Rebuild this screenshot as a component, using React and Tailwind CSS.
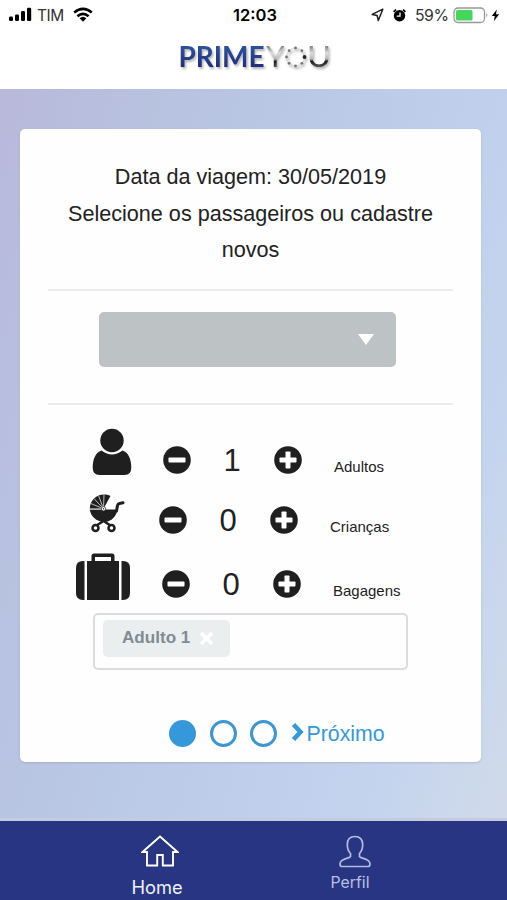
import React from "react";

const INK = "#1f1f1f";

function Signal() {
  return (
    <svg className="block" width="24" height="16" viewBox="0 0 24 16">
      <rect x="1" y="9.5" width="4" height="4.5" rx="1.2" />
      <rect x="7" y="7.5" width="4" height="6.5" rx="1.2" />
      <rect x="13" y="4" width="4" height="10" rx="1.2" />
      <rect x="19" y="0.8" width="4.2" height="13.2" rx="1.2" />
    </svg>
  );
}

function Wifi() {
  return (
    <svg className="block" width="20" height="16" viewBox="0 0 20 16" fill="none" stroke="#000" strokeWidth="2.6">
      <path d="M1.2 5.6Q10-2 18.8 5.6" />
      <path d="M4.4 9.2Q10 4.4 15.6 9.2" />
      <path d="M6.6 11.3Q10 8.2 13.4 11.3L10 14.8Z" fill="#000" stroke="none" />
    </svg>
  );
}

function StatusBar() {
  return (
    <div className="flex h-[30px] items-center pl-2 font-[Inter,sans-serif] text-[16px] leading-none text-black">
      <div className="flex w-[225px] items-center">
        <Signal />
        <span className="ml-[5px] w-[27px] pt-px text-[15.5px] tracking-[-0.4px] text-[#333]">TIM</span>
        <span className="ml-[9px]"><Wifi /></span>
      </div>
      <span className="w-[46px] text-[16.5px] font-semibold">12:03</span>
      <div className="ml-[92px] flex items-center">
        <svg className="block" width="13" height="14" viewBox="0 0 13 14" fill="none" stroke="#222" strokeWidth="1.5" strokeLinejoin="round">
          <path d="M11.8 1.2L1.2 6.4L6.1 7.5L7.3 12.5Z" />
        </svg>
        <svg className="ml-[8px] block" width="15" height="15" viewBox="0 0 15 15">
          <circle cx="7.5" cy="7.8" r="5.7" />
          <path d="M1.6 3.8L4 1.6M13.4 3.8L11 1.6" stroke="#000" strokeWidth="1.8" />
          <path d="M8 4.5V8.2H4.7" fill="none" stroke="#fff" strokeWidth="1.3" />
        </svg>
        <span className="ml-[8px] w-[34px] pt-px text-[15.8px] tracking-[-0.5px] text-[#333]">59%</span>
        <svg className="ml-[4px] block" width="36" height="17" viewBox="0 0 36 17">
          <rect x="1" y="1" width="30.5" height="14.5" rx="4" fill="#fff" stroke="#999" strokeWidth="1.3" />
          <rect x="3" y="3" width="16.5" height="10.5" rx="1.5" fill="#43d75c" />
          <path d="M33.3 6Q35.5 8.2 33.3 10.5Z" fill="#999" />
        </svg>
        <svg className="ml-[2px] block" width="9" height="13" viewBox="0 0 9 13">
          <path d="M5.8 0.5L0.8 7H3.8L2.8 12.3L8.2 5.3H5Z" />
        </svg>
      </div>
    </div>
  );
}

const STARS = Array.from({ length: 8 }, (_, i) => {
  const a = (i * Math.PI) / 4;
  return [119.5 + 9 * Math.sin(a), 21 - 9 * Math.cos(a)];
});

function Logo() {
  return (
    <svg className="block" width="160" height="42" viewBox="0 0 160 42">
      <defs>
        <linearGradient id="navy" x1="0" y1="0" x2="0" y2="1">
          <stop offset="0.2" stopColor="#2c52a0" />
          <stop offset="0.85" stopColor="#202c78" />
        </linearGradient>
        <linearGradient id="chrome" gradientUnits="userSpaceOnUse" x1="0" y1="11" x2="0" y2="31">
          <stop offset="0" stopColor="#8a8a8a" />
          <stop offset="0.3" stopColor="#dedede" />
          <stop offset="0.6" stopColor="#b5b5b5" />
          <stop offset="0.72" stopColor="#1c1c1c" />
          <stop offset="1" stopColor="#555" />
        </linearGradient>
        <filter id="shade" x="-5%" y="-20%" width="112%" height="150%">
          <feDropShadow dx="1.4" dy="2" stdDeviation="1.1" floodColor="#555" floodOpacity="0.45" />
        </filter>
      </defs>
      <g filter="url(#shade)" fontFamily="Lato, sans-serif" fontSize="28">
        <text x="2.5" y="31.3" fontWeight="700" fill="url(#navy)" textLength="86" lengthAdjust="spacingAndGlyphs">PRIME</text>
        <text x="90" y="31.3" fontWeight="400" fill="url(#chrome)" textLength="18.5" lengthAdjust="spacingAndGlyphs">Y</text>
        <circle cx="119.5" cy="21" r="9" fill="none" stroke="#d6d6d6" strokeWidth="1.2" />
        {STARS.map(([x, y], i) => (
          <circle key={i} cx={x} cy={y} r={i === 2 ? 1.9 : 1.4} fill={i === 2 ? "#222" : "#777"} />
        ))}
        <text x="131" y="31.3" fontWeight="400" fill="url(#chrome)" textLength="24" lengthAdjust="spacingAndGlyphs">U</text>
      </g>
    </svg>
  );
}

function Person() {
  return (
    <svg className="block" width="40" height="48" viewBox="0 0 40 48" fill={INK}>
      <circle cx="20" cy="12.5" r="11.7" />
      <path d="M9.5 22.4Q20 30.5 30.5 22.4C36.5 24.5 39.3 31 39.3 39.5Q39.3 47 32.5 47H7.5Q0.7 47 0.7 39.5C0.7 31 3.5 24.5 9.5 22.4Z" />
    </svg>
  );
}

function Stroller() {
  return (
    <svg className="block" width="36" height="39" viewBox="0 0 36 39">
      <path d="M14.5 14.8L21.5 2C12-2.5.8 3.5.8 14.8Z" fill={INK} />
      <path d="M.8 15.6H28.5C27.5 22 22.5 28 15.5 28C7 28 1.5 22 .8 15.6Z" fill={INK} />
      <path d="M14.5 14.8L1.8 9.5M14.5 14.8L5 4.6M14.5 14.8L9.5 1.5M14.5 14.8L15 .5M.8 15H14.5" stroke="#ccc" strokeWidth="0.9" />
      <path d="M27.5 17L28.5 11.5Q29 9.8 30.5 9.5L34 8.8" stroke={INK} strokeWidth="3" fill="none" strokeLinecap="round" />
      <path d="M7.5 31.5L14.5 27L21.5 31.5" stroke={INK} strokeWidth="2.4" fill="none" />
      <circle cx="14.5" cy="14.8" r="2.2" fill="#fff" stroke={INK} strokeWidth="0.7" />
      <circle cx="14.5" cy="14.8" r="0.7" fill={INK} />
      <circle cx="6.5" cy="34" r="3" fill="#fff" stroke={INK} strokeWidth="2.5" />
      <circle cx="22.5" cy="34" r="3" fill="#fff" stroke={INK} strokeWidth="2.5" />
    </svg>
  );
}

function Suitcase() {
  return (
    <svg className="block" width="54" height="48" viewBox="0 0 54 48" fill={INK}>
      <path d="M8.5 8V47H7Q0 47 0 40V15Q0 8 7 8ZM45.5 8V47H47Q54 47 54 40V15Q54 8 47 8Z" />
      <path fillRule="evenodd" d="M11 8H15.5V3Q15.5.5 18 .5H36Q38.5.5 38.5 3V8H43V47H11ZM19 4V8H35V4Z" />
    </svg>
  );
}

function Round({ plus }) {
  return (
    <svg className="block" width="28" height="28" viewBox="0 0 28 28">
      <circle cx="14" cy="14" r="13.8" fill={INK} />
      <rect x="5.5" y="11.5" width="17" height="5" rx="0.8" fill="#fff" />
      {plus && <rect x="11.5" y="5.5" width="5" height="17" rx="0.8" fill="#fff" />}
    </svg>
  );
}

function Stepper({ value, label }) {
  return (
    <div className="flex items-center">
      <Round />
      <span className="w-[82px] pt-[2px] text-center text-[31px] leading-7">{value}</span>
      <span className="ml-px"><Round plus /></span>
      <span className="ml-8 pt-[14px] text-[15px] leading-4">{label}</span>
    </div>
  );
}

export default function App() {
  return (
    <div className="flex h-[900px] w-[507px] flex-col overflow-hidden bg-white font-['Liberation_Sans',Arial,sans-serif] text-[#222]">
      <header className="flex h-[89px] flex-col">
        <StatusBar />
        <div className="flex pl-[176px] pt-[6px]"><Logo /></div>
      </header>

      <main className="h-[729px] bg-[linear-gradient(107deg,#b9b9da_0%,#b7c2df_22%,#bbcae7_48%,#bfcfec_66%,#c5d4ee_82%,#d0dae9_100%)] pl-[20px] pt-[40px]">
        <section className="flex h-[633px] w-[461px] flex-col rounded-[5px] bg-[#fefefe] px-7 shadow-[0_1px_2px_rgba(80,80,110,0.2)]">
          <div className="pt-[30px] text-center text-[21.6px] leading-[36.5px]">
            <p>Data da viagem: 30/05/2019</p>
            <p>Selecione os passageiros ou cadastre novos</p>
          </div>
          <hr className="mt-[20px] border-t-2 border-[#ebebeb]" />
          <div className="ml-[51px] mt-[21px] flex h-[55px] w-[297px] items-center justify-end rounded-[5px] bg-[#bdc3c5] pr-[22px]">
            <svg className="block" width="16" height="11" viewBox="0 0 16 11"><path d="M0 0H16L8 11Z" fill="#fff" /></svg>
          </div>
          <hr className="mt-[36px] border-t-2 border-[#ebebeb]" />

          <div className="flex h-[71px] items-end">
            <div className="ml-[44px] w-[71px]"><Person /></div>
            <div className="pb-px"><Stepper value="1" label="Adultos" /></div>
          </div>
          <div className="flex h-[59px] items-end">
            <div className="ml-[41px] w-[70px] pb-[2px]"><Stroller /></div>
            <Stepper value="0" label="Crianças" />
          </div>
          <div className="flex h-[66px] items-end">
            <div className="ml-[28px] w-[86px]"><Suitcase /></div>
            <div className="pb-[2px]"><Stepper value="0" label="Bagagens" /></div>
          </div>

          <div className="ml-[45px] mt-[12px] flex h-[57px] w-[315px] rounded-[5px] border-2 border-[#dcdcdc] pl-2 pt-[5px]">
            <div className="flex h-[37px] w-[127px] items-center rounded-[5px] bg-[#ebeeef] pl-[19px]">
              <span className="text-[17.1px] font-bold text-[#818b93]">Adulto 1</span>
              <svg className="ml-[9px] block" width="15" height="15" viewBox="0 0 15 15"><path d="M2 2L13 13M13 2L2 13" stroke="#fff" strokeWidth="3.8" /></svg>
            </div>
          </div>

          <div className="ml-[121px] mt-[50px] flex h-7 items-center text-[#3498db]">
            <span className="size-[27px] rounded-full bg-[#3498db]" />
            <span className="ml-[14px] size-[27px] rounded-full border-[3px] border-[#3c96d2]" />
            <span className="ml-[13px] size-[27px] rounded-full border-[3px] border-[#3c96d2]" />
            <svg className="mb-[3px] ml-[14px] block" width="14" height="20" viewBox="0 0 14 20"><path d="M2.5 2.5L9.5 10L2.5 17.5" fill="none" stroke="#3498db" strokeWidth="4.6" /></svg>
            <span className="ml-[1.5px] text-[21.3px] leading-7">Próximo</span>
          </div>
        </section>
      </main>

      <nav className="flex h-[82px] border-t-[3px] border-[#c3cbe0] bg-[#283583] font-[Inter,sans-serif]">
        <div className="ml-[117px] flex w-20 flex-col items-center pt-[14px] text-[#eef0fa]">
          <svg className="ml-[6px] block" width="38" height="32" viewBox="0 0 38 32" fill="none" stroke="#fff" strokeWidth="1.9">
            <path d="M19 1.5L36.5 17H32V30.5H21.8V20H16.2V30.5H6V17H1.5Z" />
          </svg>
          <span className="mt-[8px] text-[18.3px] leading-6">Home</span>
        </div>
        <div className="ml-[113px] flex w-20 flex-col items-center pt-[14px] text-[#b9c0e2]">
          <svg className="ml-[9px] block" width="34" height="33" viewBox="0 0 34 33" fill="none" stroke="#b4bbdf" strokeWidth="1.7">
            <path d="M17 1.5C12 1.5 9.3 4.5 9.3 9.5C9.3 14 10.5 16.5 12.5 18.5V21.5C11 24 2 23 2 29Q2 31.5 4 31.5H30Q32 31.5 32 29C32 23 23 24 21.500 21.500V18.500C23.500 16.500 24.700 14 24.700 9.500C24.700 4.500 22 1.500 17 1.500Z" />
          </svg>
          <span className="mt-[5px] text-[15.8px] leading-5">Perfil</span>
        </div>
      </nav>
    </div>
  );
}
